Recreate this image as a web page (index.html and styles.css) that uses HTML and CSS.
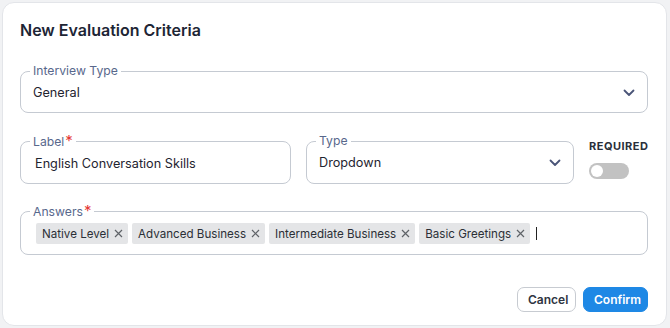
FILE: index.html
```html
<!DOCTYPE html>
<html lang="en">
<head>
  <meta charset="UTF-8" />
  <title>New Evaluation Criteria</title>
  <link rel="stylesheet" href="styles.css">
</head>
<body>
  <div class="modal">
    <h2 class="title">New Evaluation Criteria</h2>

    <fieldset class="field field-first">
      <legend>Interview Type</legend>
      <div class="field-row">
        <span class="value">General</span>
        <svg class="chevron" width="12" height="8" viewBox="0 0 12 8"><path d="M1.5 1.5 6 6l4.5-4.5" fill="none" stroke="#4a5578" stroke-width="1.8" stroke-linecap="round" stroke-linejoin="round"/></svg>
      </div>
    </fieldset>

    <div class="row">
      <fieldset class="field">
        <legend>Label<span class="star">*</span></legend>
        <div class="field-row">
          <span class="value value-input">English Conversation Skills</span>
        </div>
      </fieldset>
      <fieldset class="field">
        <legend>Type</legend>
        <div class="field-row">
          <span class="value">Dropdown</span>
          <svg class="chevron" width="12" height="8" viewBox="0 0 12 8"><path d="M1.5 1.5 6 6l4.5-4.5" fill="none" stroke="#4a5578" stroke-width="1.8" stroke-linecap="round" stroke-linejoin="round"/></svg>
        </div>
      </fieldset>
      <div class="required">
        <div class="required-label">REQUIRED</div>
        <div class="toggle"><span class="knob"></span></div>
      </div>
    </div>

    <fieldset class="field">
      <legend>Answers<span class="star">*</span></legend>
      <div class="tags">
        <span class="tag"><span>Native Level</span><svg width="9" height="9" viewBox="0 0 9 9"><path d="M1 1l7 7M8 1 1 8" stroke="#5f6368" stroke-width="1.2"/></svg></span>
        <span class="tag"><span>Advanced Business</span><svg width="9" height="9" viewBox="0 0 9 9"><path d="M1 1l7 7M8 1 1 8" stroke="#5f6368" stroke-width="1.2"/></svg></span>
        <span class="tag"><span>Intermediate Business</span><svg width="9" height="9" viewBox="0 0 9 9"><path d="M1 1l7 7M8 1 1 8" stroke="#5f6368" stroke-width="1.2"/></svg></span>
        <span class="tag"><span>Basic Greetings</span><svg width="9" height="9" viewBox="0 0 9 9"><path d="M1 1l7 7M8 1 1 8" stroke="#5f6368" stroke-width="1.2"/></svg></span>
        <span class="caret"></span>
      </div>
    </fieldset>

    <div class="actions">
      <button class="btn btn-cancel">Cancel</button>
      <button class="btn btn-confirm">Confirm</button>
    </div>
  </div>
</body>
</html>
```

FILE: styles.css
```css
* {
  box-sizing: border-box;
}
body {
  margin: 0;
  padding: 2px 3px 2px 2px;
  background-color: #f1f2f4;
  font-family: 'Inter', 'Noto Sans', sans-serif;
  color: #1f2430;
}
.modal {
  width: 665px;
  height: 324px;
  background-color: white;
  border: 1px solid #e3e5e9;
  border-radius: 12px;
  padding: 17px 18px 13px 17px;
  display: flex;
  flex-direction: column;
}
.title {
  margin: 0;
  font-size: 16px;
  line-height: 20px;
  font-weight: 600;
  color: #1d2535;
}
.field {
  margin: 0;
  padding: 0 12px;
  border: 1px solid #c5cad2;
  border-radius: 8px;
  min-width: 0;
}
.field-first {
  margin-top: 24px;
}
.field legend {
  padding: 0 3px;
  margin-left: -3px;
  font-size: 12.2px;
  line-height: 14px;
  color: #58688c;
}
.star {
  color: #e53935;
  font-size: 15px;
  margin-left: 1px;
}
.field-row {
  display: flex;
  justify-content: space-between;
  align-items: center;
  padding: 5px 0 9px;
}
.value {
  font-size: 12.7px;
  line-height: 20px;
  color: #1f2430;
}
.value-input {
  padding-left: 2px;
}
.row {
  display: grid;
  grid-template-columns: 271px 268px 1fr;
  gap: 15px;
  margin: 21px 0 20px;
}
.required {
  padding-top: 5px;
}
.required-label {
  font-size: 11px;
  font-weight: 700;
  letter-spacing: 0.5px;
  color: #2a2f3a;
  line-height: 14px;
}
.toggle {
  margin-top: 10px;
  width: 40px;
  height: 16px;
  border-radius: 8px;
  background-color: #c2c2c2;
  padding: 2px;
}
.knob {
  display: block;
  width: 12px;
  height: 12px;
  border-radius: 50%;
  background-color: white;
}
.tags {
  display: flex;
  align-items: center;
  gap: 4px;
  padding: 4px 0 10px;
  margin-left: 3px;
}
.tag {
  display: flex;
  align-items: center;
  gap: 5px;
  height: 21px;
  padding: 0 5px 0 6px;
  background-color: #e4e5e7;
  border-radius: 2px;
  font-size: 11.6px;
  color: #2b2f36;
}
.caret {
  width: 1px;
  height: 13px;
  margin-left: 2px;
  background-color: #222;
}
.actions {
  margin-top: auto;
  display: flex;
  justify-content: flex-end;
  gap: 7px;
}
.btn {
  height: 25px;
  border-radius: 7px;
  font-family: inherit;
  font-size: 12px;
  font-weight: 600;
  padding: 0 10px;
  cursor: pointer;
}
.btn-cancel {
  width: 59px;
  background-color: white;
  border: 1px solid #c7cbd1;
  color: #2f3542;
}
.btn-confirm {
  width: 65px;
  background-color: #1e88e5;
  border: 1px solid #1e88e5;
  color: white;
}
```
